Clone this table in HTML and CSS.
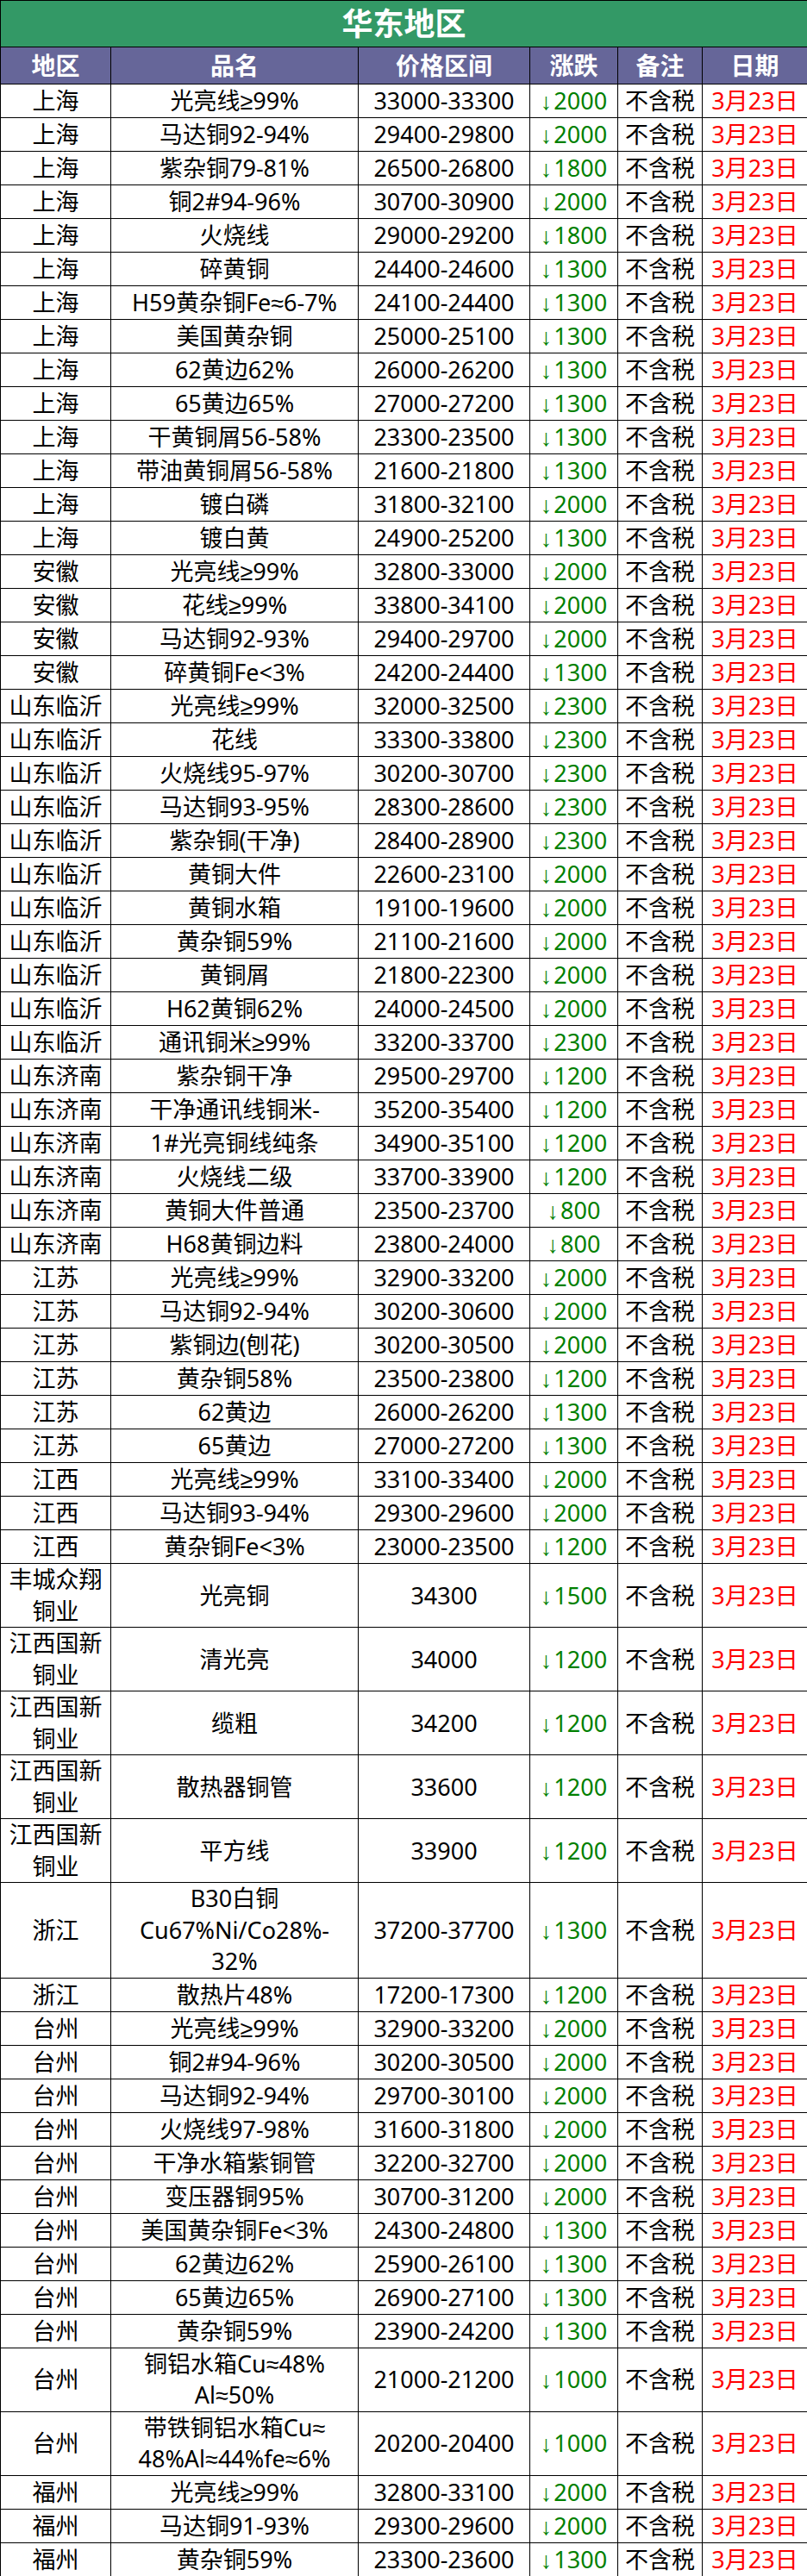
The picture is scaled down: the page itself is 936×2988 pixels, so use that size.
FILE: index.html
```html
<!DOCTYPE html>
<html lang="zh-CN">
<head>
<meta charset="utf-8">
<title>华东地区</title>
<link rel="stylesheet" href="styles.css">
</head>
<body>
<table class="tbl">
<colgroup>
<col class="c1"><col class="c2"><col class="c3"><col class="c4"><col class="c5"><col class="c6">
</colgroup>
<thead>
<tr class="title"><th colspan="6">华东地区</th></tr>
<tr class="head"><th>地区</th><th>品名</th><th>价格区间</th><th>涨跌</th><th>备注</th><th>日期</th></tr>
</thead>
<tbody>
<tr><td>上海</td><td>光亮线≥99%</td><td>33000-33300</td><td class="chg"><span class="arr">↓</span>2000</td><td>不含税</td><td class="date">3月23日</td></tr>
<tr><td>上海</td><td>马达铜92-94%</td><td>29400-29800</td><td class="chg"><span class="arr">↓</span>2000</td><td>不含税</td><td class="date">3月23日</td></tr>
<tr><td>上海</td><td>紫杂铜79-81%</td><td>26500-26800</td><td class="chg"><span class="arr">↓</span>1800</td><td>不含税</td><td class="date">3月23日</td></tr>
<tr><td>上海</td><td>铜2#94-96%</td><td>30700-30900</td><td class="chg"><span class="arr">↓</span>2000</td><td>不含税</td><td class="date">3月23日</td></tr>
<tr><td>上海</td><td>火烧线</td><td>29000-29200</td><td class="chg"><span class="arr">↓</span>1800</td><td>不含税</td><td class="date">3月23日</td></tr>
<tr><td>上海</td><td>碎黄铜</td><td>24400-24600</td><td class="chg"><span class="arr">↓</span>1300</td><td>不含税</td><td class="date">3月23日</td></tr>
<tr><td>上海</td><td>H59黄杂铜Fe≈6-7%</td><td>24100-24400</td><td class="chg"><span class="arr">↓</span>1300</td><td>不含税</td><td class="date">3月23日</td></tr>
<tr><td>上海</td><td>美国黄杂铜</td><td>25000-25100</td><td class="chg"><span class="arr">↓</span>1300</td><td>不含税</td><td class="date">3月23日</td></tr>
<tr><td>上海</td><td>62黄边62%</td><td>26000-26200</td><td class="chg"><span class="arr">↓</span>1300</td><td>不含税</td><td class="date">3月23日</td></tr>
<tr><td>上海</td><td>65黄边65%</td><td>27000-27200</td><td class="chg"><span class="arr">↓</span>1300</td><td>不含税</td><td class="date">3月23日</td></tr>
<tr><td>上海</td><td>干黄铜屑56-58%</td><td>23300-23500</td><td class="chg"><span class="arr">↓</span>1300</td><td>不含税</td><td class="date">3月23日</td></tr>
<tr><td>上海</td><td>带油黄铜屑56-58%</td><td>21600-21800</td><td class="chg"><span class="arr">↓</span>1300</td><td>不含税</td><td class="date">3月23日</td></tr>
<tr><td>上海</td><td>镀白磷</td><td>31800-32100</td><td class="chg"><span class="arr">↓</span>2000</td><td>不含税</td><td class="date">3月23日</td></tr>
<tr><td>上海</td><td>镀白黄</td><td>24900-25200</td><td class="chg"><span class="arr">↓</span>1300</td><td>不含税</td><td class="date">3月23日</td></tr>
<tr><td>安徽</td><td>光亮线≥99%</td><td>32800-33000</td><td class="chg"><span class="arr">↓</span>2000</td><td>不含税</td><td class="date">3月23日</td></tr>
<tr><td>安徽</td><td>花线≥99%</td><td>33800-34100</td><td class="chg"><span class="arr">↓</span>2000</td><td>不含税</td><td class="date">3月23日</td></tr>
<tr><td>安徽</td><td>马达铜92-93%</td><td>29400-29700</td><td class="chg"><span class="arr">↓</span>2000</td><td>不含税</td><td class="date">3月23日</td></tr>
<tr><td>安徽</td><td>碎黄铜Fe&lt;3%</td><td>24200-24400</td><td class="chg"><span class="arr">↓</span>1300</td><td>不含税</td><td class="date">3月23日</td></tr>
<tr><td>山东临沂</td><td>光亮线≥99%</td><td>32000-32500</td><td class="chg"><span class="arr">↓</span>2300</td><td>不含税</td><td class="date">3月23日</td></tr>
<tr><td>山东临沂</td><td>花线</td><td>33300-33800</td><td class="chg"><span class="arr">↓</span>2300</td><td>不含税</td><td class="date">3月23日</td></tr>
<tr><td>山东临沂</td><td>火烧线95-97%</td><td>30200-30700</td><td class="chg"><span class="arr">↓</span>2300</td><td>不含税</td><td class="date">3月23日</td></tr>
<tr><td>山东临沂</td><td>马达铜93-95%</td><td>28300-28600</td><td class="chg"><span class="arr">↓</span>2300</td><td>不含税</td><td class="date">3月23日</td></tr>
<tr><td>山东临沂</td><td>紫杂铜(干净)</td><td>28400-28900</td><td class="chg"><span class="arr">↓</span>2300</td><td>不含税</td><td class="date">3月23日</td></tr>
<tr><td>山东临沂</td><td>黄铜大件</td><td>22600-23100</td><td class="chg"><span class="arr">↓</span>2000</td><td>不含税</td><td class="date">3月23日</td></tr>
<tr><td>山东临沂</td><td>黄铜水箱</td><td>19100-19600</td><td class="chg"><span class="arr">↓</span>2000</td><td>不含税</td><td class="date">3月23日</td></tr>
<tr><td>山东临沂</td><td>黄杂铜59%</td><td>21100-21600</td><td class="chg"><span class="arr">↓</span>2000</td><td>不含税</td><td class="date">3月23日</td></tr>
<tr><td>山东临沂</td><td>黄铜屑</td><td>21800-22300</td><td class="chg"><span class="arr">↓</span>2000</td><td>不含税</td><td class="date">3月23日</td></tr>
<tr><td>山东临沂</td><td>H62黄铜62%</td><td>24000-24500</td><td class="chg"><span class="arr">↓</span>2000</td><td>不含税</td><td class="date">3月23日</td></tr>
<tr><td>山东临沂</td><td>通讯铜米≥99%</td><td>33200-33700</td><td class="chg"><span class="arr">↓</span>2300</td><td>不含税</td><td class="date">3月23日</td></tr>
<tr><td>山东济南</td><td>紫杂铜干净</td><td>29500-29700</td><td class="chg"><span class="arr">↓</span>1200</td><td>不含税</td><td class="date">3月23日</td></tr>
<tr><td>山东济南</td><td>干净通讯线铜米-</td><td>35200-35400</td><td class="chg"><span class="arr">↓</span>1200</td><td>不含税</td><td class="date">3月23日</td></tr>
<tr><td>山东济南</td><td>1#光亮铜线纯条</td><td>34900-35100</td><td class="chg"><span class="arr">↓</span>1200</td><td>不含税</td><td class="date">3月23日</td></tr>
<tr><td>山东济南</td><td>火烧线二级</td><td>33700-33900</td><td class="chg"><span class="arr">↓</span>1200</td><td>不含税</td><td class="date">3月23日</td></tr>
<tr><td>山东济南</td><td>黄铜大件普通</td><td>23500-23700</td><td class="chg"><span class="arr">↓</span>800</td><td>不含税</td><td class="date">3月23日</td></tr>
<tr><td>山东济南</td><td>H68黄铜边料</td><td>23800-24000</td><td class="chg"><span class="arr">↓</span>800</td><td>不含税</td><td class="date">3月23日</td></tr>
<tr><td>江苏</td><td>光亮线≥99%</td><td>32900-33200</td><td class="chg"><span class="arr">↓</span>2000</td><td>不含税</td><td class="date">3月23日</td></tr>
<tr><td>江苏</td><td>马达铜92-94%</td><td>30200-30600</td><td class="chg"><span class="arr">↓</span>2000</td><td>不含税</td><td class="date">3月23日</td></tr>
<tr><td>江苏</td><td>紫铜边(刨花)</td><td>30200-30500</td><td class="chg"><span class="arr">↓</span>2000</td><td>不含税</td><td class="date">3月23日</td></tr>
<tr><td>江苏</td><td>黄杂铜58%</td><td>23500-23800</td><td class="chg"><span class="arr">↓</span>1200</td><td>不含税</td><td class="date">3月23日</td></tr>
<tr><td>江苏</td><td>62黄边</td><td>26000-26200</td><td class="chg"><span class="arr">↓</span>1300</td><td>不含税</td><td class="date">3月23日</td></tr>
<tr><td>江苏</td><td>65黄边</td><td>27000-27200</td><td class="chg"><span class="arr">↓</span>1300</td><td>不含税</td><td class="date">3月23日</td></tr>
<tr><td>江西</td><td>光亮线≥99%</td><td>33100-33400</td><td class="chg"><span class="arr">↓</span>2000</td><td>不含税</td><td class="date">3月23日</td></tr>
<tr><td>江西</td><td>马达铜93-94%</td><td>29300-29600</td><td class="chg"><span class="arr">↓</span>2000</td><td>不含税</td><td class="date">3月23日</td></tr>
<tr><td>江西</td><td>黄杂铜Fe&lt;3%</td><td>23000-23500</td><td class="chg"><span class="arr">↓</span>1200</td><td>不含税</td><td class="date">3月23日</td></tr>
<tr><td class="ml">丰城众翔<br>铜业</td><td>光亮铜</td><td>34300</td><td class="chg"><span class="arr">↓</span>1500</td><td>不含税</td><td class="date">3月23日</td></tr>
<tr><td class="ml">江西国新<br>铜业</td><td>清光亮</td><td>34000</td><td class="chg"><span class="arr">↓</span>1200</td><td>不含税</td><td class="date">3月23日</td></tr>
<tr><td class="ml">江西国新<br>铜业</td><td>缆粗</td><td>34200</td><td class="chg"><span class="arr">↓</span>1200</td><td>不含税</td><td class="date">3月23日</td></tr>
<tr><td class="ml">江西国新<br>铜业</td><td>散热器铜管</td><td>33600</td><td class="chg"><span class="arr">↓</span>1200</td><td>不含税</td><td class="date">3月23日</td></tr>
<tr><td class="ml">江西国新<br>铜业</td><td>平方线</td><td>33900</td><td class="chg"><span class="arr">↓</span>1200</td><td>不含税</td><td class="date">3月23日</td></tr>
<tr><td>浙江</td><td class="ml">B30白铜<br>Cu67%Ni/Co28%-<br>32%</td><td>37200-37700</td><td class="chg"><span class="arr">↓</span>1300</td><td>不含税</td><td class="date">3月23日</td></tr>
<tr><td>浙江</td><td>散热片48%</td><td>17200-17300</td><td class="chg"><span class="arr">↓</span>1200</td><td>不含税</td><td class="date">3月23日</td></tr>
<tr><td>台州</td><td>光亮线≥99%</td><td>32900-33200</td><td class="chg"><span class="arr">↓</span>2000</td><td>不含税</td><td class="date">3月23日</td></tr>
<tr><td>台州</td><td>铜2#94-96%</td><td>30200-30500</td><td class="chg"><span class="arr">↓</span>2000</td><td>不含税</td><td class="date">3月23日</td></tr>
<tr><td>台州</td><td>马达铜92-94%</td><td>29700-30100</td><td class="chg"><span class="arr">↓</span>2000</td><td>不含税</td><td class="date">3月23日</td></tr>
<tr><td>台州</td><td>火烧线97-98%</td><td>31600-31800</td><td class="chg"><span class="arr">↓</span>2000</td><td>不含税</td><td class="date">3月23日</td></tr>
<tr><td>台州</td><td>干净水箱紫铜管</td><td>32200-32700</td><td class="chg"><span class="arr">↓</span>2000</td><td>不含税</td><td class="date">3月23日</td></tr>
<tr><td>台州</td><td>变压器铜95%</td><td>30700-31200</td><td class="chg"><span class="arr">↓</span>2000</td><td>不含税</td><td class="date">3月23日</td></tr>
<tr><td>台州</td><td>美国黄杂铜Fe&lt;3%</td><td>24300-24800</td><td class="chg"><span class="arr">↓</span>1300</td><td>不含税</td><td class="date">3月23日</td></tr>
<tr><td>台州</td><td>62黄边62%</td><td>25900-26100</td><td class="chg"><span class="arr">↓</span>1300</td><td>不含税</td><td class="date">3月23日</td></tr>
<tr><td>台州</td><td>65黄边65%</td><td>26900-27100</td><td class="chg"><span class="arr">↓</span>1300</td><td>不含税</td><td class="date">3月23日</td></tr>
<tr><td>台州</td><td>黄杂铜59%</td><td>23900-24200</td><td class="chg"><span class="arr">↓</span>1300</td><td>不含税</td><td class="date">3月23日</td></tr>
<tr><td>台州</td><td class="ml">铜铝水箱Cu≈48%<br>Al≈50%</td><td>21000-21200</td><td class="chg"><span class="arr">↓</span>1000</td><td>不含税</td><td class="date">3月23日</td></tr>
<tr><td>台州</td><td class="ml">带铁铜铝水箱Cu≈<br>48%Al≈44%fe≈6%</td><td>20200-20400</td><td class="chg"><span class="arr">↓</span>1000</td><td>不含税</td><td class="date">3月23日</td></tr>
<tr><td>福州</td><td>光亮线≥99%</td><td>32800-33100</td><td class="chg"><span class="arr">↓</span>2000</td><td>不含税</td><td class="date">3月23日</td></tr>
<tr><td>福州</td><td>马达铜91-93%</td><td>29300-29600</td><td class="chg"><span class="arr">↓</span>2000</td><td>不含税</td><td class="date">3月23日</td></tr>
<tr><td>福州</td><td>黄杂铜59%</td><td>23300-23600</td><td class="chg"><span class="arr">↓</span>1300</td><td>不含税</td><td class="date">3月23日</td></tr>
</tbody>
</table>
</body>
</html>
```

FILE: styles.css
```css
html, body {
  margin: 0;
  padding: 0;
  background: #ffffff;
}

body {
  font-family: "Noto Sans", "Liberation Sans", "Noto Sans CJK SC", sans-serif;
  color: #000000;
}

.tbl {
  border-collapse: collapse;
  table-layout: fixed;
  width: 936px;
}

.c1 { width: 128px; }
.c2 { width: 287px; }
.c3 { width: 199px; }
.c4 { width: 102px; }
.c5 { width: 98px; }
.c6 { width: 122px; }

.tbl th,
.tbl td {
  border: 1px solid #000000;
  text-align: center;
  vertical-align: middle;
  white-space: nowrap;
  overflow: hidden;
  padding: 0;
  font-size: 27px;
  line-height: 38px;
  font-weight: normal;
}

.tbl td.ml {
  line-height: 36.5px;
}

.title th {
  background: #339966;
  color: #ffffff;
  font-size: 36px;
  font-weight: bold;
  line-height: 53px;
}

.head th {
  background: #666699;
  color: #ffffff;
  font-size: 28px;
  font-weight: bold;
  line-height: 42px;
}

.chg {
  color: #008000;
  font-weight: bold;
}

.arr {
  font-family: "Liberation Sans", sans-serif;
  font-weight: normal;
  line-height: 20px;
  margin-right: 2px;
}

.date {
  color: #ff0000;
}
```
